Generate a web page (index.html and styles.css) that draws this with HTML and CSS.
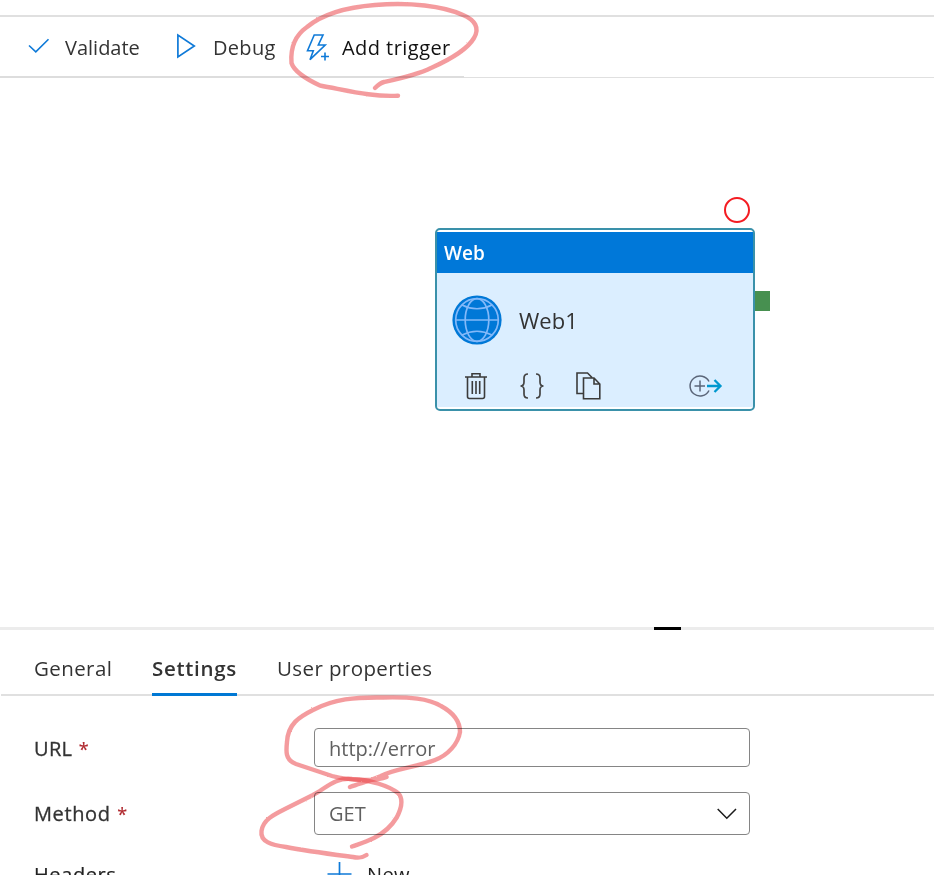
FILE: index.html
```html
<!DOCTYPE html>
<html lang="en">
<head>
<meta charset="utf-8">
<title>Pipeline</title>
<link rel="stylesheet" href="styles.css">
</head>
<body>
<div class="app">
  <header class="toolbar">
    <div class="tool validate">
      <svg width="22" height="16" viewBox="0 0 22 16"><path d="M1 7.5 7.8 13.9 20.5 1.2" fill="none" stroke="#0f7ad8" stroke-width="1.6"/></svg>
      <span>Validate</span>
    </div>
    <div class="tool debug">
      <svg width="20" height="26" viewBox="0 0 20 26"><path d="M1.9 2V24L18.300 13Z" fill="none" stroke="#0f7ad8" stroke-width="1.7"/></svg>
      <span>Debug</span>
    </div>
    <div class="tool trigger">
      <svg width="24" height="28" viewBox="0 0 24 28" fill="none" stroke="#0f7ad8" stroke-width="1.6"><path d="M8.2 1H17L12.3 11H19.2L4 25.700 7.3 16.700H1.5Z"/><path d="M15 22.500H23M19 18.500V26.500"/></svg>
      <span>Add trigger</span>
    </div>
  </header>

  <main class="canvas">
    <section class="activity">
      <div class="activity-title">Web</div>
      <div class="activity-body">
        <div class="activity-name">
          <svg width="50" height="50" viewBox="0 0 50 50"><circle cx="25" cy="25" r="24.6" fill="#0078d7"/><g fill="none" stroke="#83b9f9" stroke-width="1.7"><circle cx="25" cy="25" r="21.3"/><ellipse cx="25" cy="25" rx="11.800" ry="21.3"/><path d="M3.7 25H46.3M10 10Q25 17.5 40 10M10 40Q25 32.500 40 40"/></g></svg>
          <span>Web1</span>
        </div>
        <div class="activity-actions">
          <svg width="22" height="28" viewBox="0 0 22 28" fill="none" stroke="#3b3b3b" stroke-width="1.6"><path d="M0 5H22M7 5V1.800H15V5M2.500 5V24.500Q2.500 26.500 4.500 26.500H17.500Q19.500 26.500 19.500 24.500V5"/><path d="M7.300 9V22M11 9V22M14.700 9V22"/></svg>
          <svg width="26" height="26" viewBox="0 0 26 26" fill="none" stroke="#444" stroke-width="1.7"><path d="M9 1C6 1 5 2.500 5 5V9C5 11.500 4 13 1.500 13 4 13 5 14.500 5 17V21C5 23.500 6 25 9 25M17 1C20 1 21 2.500 21 5V9C21 11.500 22 13 24.500 13 22 13 21 14.500 21 17V21C21 23.500 20 25 17 25"/></svg>
          <svg width="25" height="28" viewBox="0 0 25 28" fill="none" stroke="#3b3b3b" stroke-width="1.6"><path d="M7 21.500H1V1H11.500L16 5.500M7.500 6H18L23.800 12V26.700H7.500ZM18 6V12H23.800"/></svg>
          <svg class="next" width="34" height="22" viewBox="0 0 34 22" fill="none"><path d="M20 6.500A10 10 0 1 0 20 15.500M5.500 11H16M11 5.500V16.500" stroke="#5b6679" stroke-width="1.5"/><path d="M18 11H31M25.500 5 31.500 11 25.500 17" stroke="#0098cf" stroke-width="2.300"/></svg>
        </div>
      </div>
      <i class="status"></i>
      <i class="port"></i>
    </section>
  </main>

  <div class="splitter"><i></i></div>

  <nav class="tabs">
    <a class="tab general">General</a>
    <a class="tab settings">Settings</a>
    <a class="tab props">User properties</a>
  </nav>

  <form class="form">
    <div class="row url-row">
      <label>URL <b>*</b></label>
      <div class="field"><span class="value">http://error</span></div>
    </div>
    <div class="row method">
      <label>Method <b>*</b></label>
      <div class="field"><span class="value">GET</span>
        <svg width="20" height="12" viewBox="0 0 20 12"><path d="M.7 1 9.800 10.300 19 1" fill="none" stroke="#1b1b1b" stroke-width="1.500"/></svg>
      </div>
    </div>
    <div class="row headers">
      <label>Headers</label>
      <div class="new">
        <svg width="26" height="26" viewBox="0 0 26 26"><path d="M.5 12H24.500M12.500 0V24" stroke="#0f7ad8" stroke-width="1.700"/></svg>
        <span>New</span>
      </div>
    </div>
  </form>

  <svg class="ink" width="934" height="875" viewBox="0 0 934 875">
    <defs><filter id="crayon" x="0" y="0" width="934" height="875" filterUnits="userSpaceOnUse"><feTurbulence type="fractalNoise" baseFrequency=".8" numOctaves="1" seed="3"/><feDisplacementMap in="SourceGraphic" scale="1.8" xChannelSelector="R" yChannelSelector="G"/></filter></defs>
    <g filter="url(#crayon)">
      <path d="M398 95.700C372 97 350 91 320 85.500C306 79 294 71 291.500 63C290 44 297 34 307 27C324 13 349 7 375 5C410 2 443 6 463 15C475 20 480 28 474 38C467 50 449 60 431 68C417 75 398 79 384 82C380 83 378 85 375 88"/>
      <path d="M386.500 777C378 781 350 781 332 776L296 764C285 760 286 751 287 742C288 724 299 717 313 710C334 699 355 697 383 697.500C410 697 428 698 441 706C454 713 460 722 460 732C458 744 448 755 435 760C417 767 393 769 381 776C370 781 361 783 350 787"/>
      <path d="M366.500 855C362 858 359 858.500 353 857C330 854 306 851 286 847C272 845 260 842 261.500 831C263 820 273 815 285 809L313 795C326 788 336 777 352 779C371 780 389 786 398 793C404 799 401 809 397 817C391 827 384 833 374 838C366 842 359 844 352 846.500"/>
    </g>
  </svg>
</div>
</body>
</html>
```
FILE: styles.css
```css
* { box-sizing: border-box; }
body { margin: 0; background: #fff; }
svg { display: block; flex: none; }
.app {
  position: relative;
  width: 934px;
  height: 875px;
  padding-top: 15px;
  overflow: hidden;
  font: 20px/28px "Open Sans", "Noto Sans", sans-serif;
  color: #333;
  white-space: nowrap;
}
.toolbar {
  display: flex;
  align-items: center;
  height: 63px;
  padding-left: 28px;
  border-top: 2px solid #e0e0e0;
  background:
    linear-gradient(#ddd, #ddd) 0 100% / 464px 2px no-repeat,
    linear-gradient(#e0e0e0, #e0e0e0) 0 100% / 100% 1px no-repeat;
}
.tool { display: flex; align-items: center; }
.validate { width: 148px; gap: 15px; }
.validate svg { margin-top: -4px; }
.debug { width: 130px; gap: 17px; letter-spacing: .3px; }
.debug svg { margin-top: -3px; }
.trigger { gap: 12px; color: #111; letter-spacing: .45px; }

.canvas { height: 549px; padding: 150px 0 0 435px; }
.activity {
  position: relative;
  width: 320px;
  height: 183px;
  padding: 2px 0;
  border: 2px solid #3a91aa;
  border-radius: 5px;
}
.activity-title {
  height: 41px;
  padding: 0 7px;
  background: #0078d9;
  color: #fff;
  font-size: 19px;
  font-weight: 600;
  line-height: 43px;
}
.activity-body { height: 134px; padding: 22px 0 0 15px; background: #dbeeff; }
.activity-name { display: flex; align-items: center; gap: 17px; font-size: 22px; }
.activity-actions { display: flex; align-items: center; margin: 27px 0 0 13px; height: 28px; }
.activity-actions svg + svg { margin-left: 32px; }
.activity-actions svg:nth-child(3) { margin-left: 31px; }
.activity-actions .next { margin-left: 88px; }
.status {
  position: absolute;
  top: -33px;
  right: 3px;
  width: 26px;
  height: 26px;
  border: 2px solid #f41c22;
  border-radius: 50%;
}
.port {
  position: absolute;
  top: 61px;
  right: -17px;
  width: 15px;
  height: 20px;
  background: #479050;
}

.splitter { height: 3px; padding-left: 654px; background: #ececec; }
.splitter i { display: block; width: 27px; height: 3px; background: #000; }

.tabs {
  display: flex;
  gap: 40px;
  height: 66px;
  margin-left: 1px;
  padding-left: 33px;
  background: linear-gradient(#e0e0e0, #e0e0e0) 0 100% / 100% 2px no-repeat;
  font-size: 20.5px;
  letter-spacing: .4px;
  line-height: 77px;
}
.tab.general { width: 78px; }
.tab.settings { width: 85px; border-bottom: 3px solid #0078d4; font-weight: 600; letter-spacing: .7px; }

.form { padding: 32px 0 0 34px; }
.row { display: flex; align-items: center; height: 39px; }
.row label { width: 280px; letter-spacing: .6px; -webkit-text-stroke: .3px #333; }
.row b { margin-left: 1px; color: #b02a30; font-size: 18px; font-weight: 400; letter-spacing: 0; -webkit-text-stroke: .2px #b02a30; }
.url-row label, .url-row .value { position: relative; top: 1px; }
.url-row label { letter-spacing: .3px; }
.row.method { height: 43px; margin-top: 25px; }
.field {
  display: flex;
  align-items: center;
  justify-content: space-between;
  width: 436px;
  height: 100%;
  padding: 0 12px 0 14px;
  border: 1px solid #858585;
  border-radius: 4px;
  color: #606060;
}
.row.headers { margin-top: 20px; }
.row.headers label { color: #222; -webkit-text-stroke: .2px #222; }
.new { display: flex; align-items: center; gap: 14px; padding-left: 13px; color: #222; letter-spacing: .4px; }

.ink {
  position: absolute;
  top: 0;
  left: 0;
  pointer-events: none;
  mix-blend-mode: multiply;
}
.ink path {
  fill: none;
  stroke: #e9383c;
  stroke-opacity: .5;
  stroke-width: 4.4;
  stroke-linecap: round;
}
```
